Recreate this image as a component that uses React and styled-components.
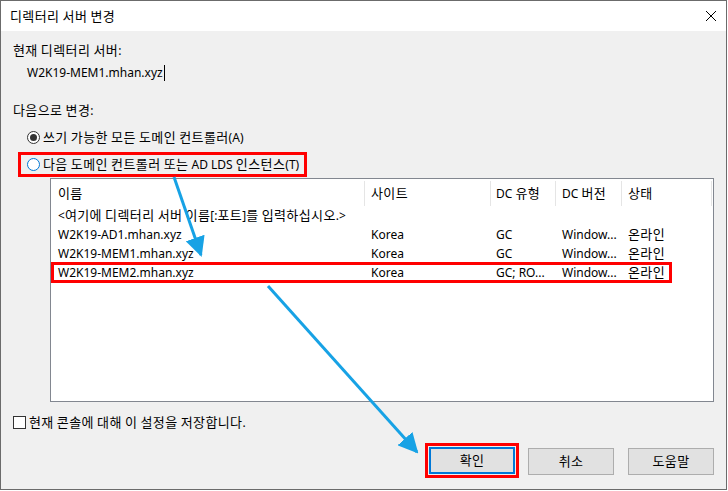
import React from "react";
import styled, { createGlobalStyle } from "styled-components";

const Global = createGlobalStyle`
  html, body { margin: 0; padding: 0; background: #ffffff; }
  body { font-family: "Noto Sans", "Noto Sans CJK KR", sans-serif; font-size: 12px; color: #000; line-height: 16px; }
  *, *::before, *::after { box-sizing: border-box; }
`;

const Han = styled.span`
  font-family: "Noto Sans CJK KR", sans-serif;
  font-size: 13px;
  letter-spacing: 0.4px;
  line-height: 16px;
`;

const Txt = styled.span`
  white-space: pre;
`;

function K({ children }) {
  const parts = String(children).split(/([\uAC00-\uD7A3]+)/);
  return (
    <Txt>
      {parts.map((p, i) =>
        /[\uAC00-\uD7A3]/.test(p) ? <Han key={i}>{p}</Han> : <React.Fragment key={i}>{p}</React.Fragment>
      )}
    </Txt>
  );
}

const Dialog = styled.div`
  position: relative;
  width: 727px;
  height: 490px;
  border: 1px solid #6b6b6b;
  background: #f0f0f0;
  display: flex;
  flex-direction: column;
`;

const TitleBar = styled.div`
  height: 30px;
  background: #ffffff;
  display: flex;
  align-items: center;
  justify-content: space-between;
  padding: 0 8px 0 9px;
`;

const CloseBtn = styled.div`
  width: 14px;
  height: 14px;
  display: flex;
  align-items: center;
  justify-content: center;
`;

const Body = styled.div`
  flex: 1;
  padding: 11px 12px 0 12px;
  display: flex;
  flex-direction: column;
`;

const Label = styled.div`
  height: 16px;
  margin-top: ${(p) => p.$mt || 0}px;
  padding-left: ${(p) => p.$pl || 0}px;
  white-space: nowrap;
  display: flex;
  align-items: center;
`;

const Caret = styled.span`
  display: inline-block;
  width: 1px;
  height: 16px;
  background: #000;
  margin-left: 1px;
`;

const RadioRow = styled.div`
  display: flex;
  align-items: center;
  height: 18px;
  margin-top: 10px;
  padding-left: 14px;
  gap: 3px;
  white-space: nowrap;
`;

const Highlight = styled.div`
  border: 3px solid #ff0000;
  align-self: flex-start;
  display: flex;
  align-items: center;
`;

const RadioHighlight = styled(Highlight)`
  margin-top: 6px;
  margin-left: 5px;
  height: 25px;
  padding: 0 5px 0 6px;
  gap: 3px;
  white-space: nowrap;
`;

const Radio = styled.span`
  width: 13px;
  height: 13px;
  border-radius: 50%;
  border: 1px solid ${(p) => (p.$focus ? "#0078d7" : "#333333")};
  background: #fff;
  display: inline-flex;
  align-items: center;
  justify-content: center;
  flex-shrink: 0;
  &::after {
    content: "";
    width: 7px;
    height: 7px;
    border-radius: 50%;
    background: ${(p) => (p.$checked ? "#333333" : "transparent")};
  }
`;

const ListBox = styled.div`
  margin-top: 1px;
  margin-left: 37px;
  width: 664px;
  height: 224px;
  background: #ffffff;
  border: 1px solid #828790;
  display: flex;
  flex-direction: column;
`;

const cols = "314px 126px 65px 66px 90px";

const HeaderRow = styled.div`
  display: grid;
  grid-template-columns: ${cols};
  height: 27px;
`;

const HeaderCell = styled.div`
  display: flex;
  align-items: center;
  padding-left: ${(p) => p.$pl ?? 7}px;
  border-right: 1px solid #e5e5e5;
  margin: 2px 0 0;
  white-space: nowrap;
`;

const Row = styled.div`
  position: relative;
  display: grid;
  grid-template-columns: ${cols};
  height: 19px;
  align-items: center;
  white-space: nowrap;
  &::after {
    content: "";
    display: ${(p) => (p.$marked ? "block" : "none")};
    position: absolute;
    left: 0;
    top: -1px;
    width: 621px;
    height: 21px;
    border: 3px solid #ff0000;
    pointer-events: none;
  }
`;

const Cell = styled.div`
  padding-left: ${(p) => p.$pl ?? 7}px;
`;

const HintRow = styled.div`
  height: 19px;
  display: flex;
  align-items: center;
  padding-left: 7px;
  white-space: nowrap;
`;

const CheckRow = styled.div`
  margin-top: 12px;
  height: 16px;
  display: flex;
  align-items: center;
  gap: 3px;
  white-space: nowrap;
`;

const CheckBox = styled.span`
  width: 13px;
  height: 13px;
  border: 1px solid #333333;
  background: #fff;
  flex-shrink: 0;
`;

const ButtonRow = styled.div`
  margin-top: 18px;
  display: flex;
  justify-content: flex-end;
  gap: 14px;
`;

const ButtonHighlight = styled(Highlight)`
  margin: -5px;
  padding: 1px;
  background: #f0f0f0;
`;

const Button = styled.div`
  width: 86px;
  height: 27px;
  background: #e1e1e1;
  border: ${(p) => (p.$focus ? "2px solid #0078d7" : "1px solid #adadad")};
  display: flex;
  align-items: center;
  justify-content: center;
`;

const Overlay = styled.svg`
  position: absolute;
  left: -1px;
  top: -1px;
  width: 728px;
  height: 491px;
  pointer-events: none;
`;

const rows = [
  ["W2K19-AD1.mhan.xyz", "Korea", "GC", "Window...", "온라인"],
  ["W2K19-MEM1.mhan.xyz", "Korea", "GC", "Window...", "온라인"],
  ["W2K19-MEM2.mhan.xyz", "Korea", "GC; RO...", "Window...", "온라인", true],
];

export default function App() {
  return (
    <>
      <Global />
      <Dialog>
        <TitleBar>
          <K>디렉터리 서버 변경</K>
          <CloseBtn>
            <svg width="12" height="12" viewBox="0 0 12 12">
              <path d="M1 1L11 11M11 1L1 11" stroke="#000" strokeWidth="1" />
            </svg>
          </CloseBtn>
        </TitleBar>
        <Body>
          <Label><K>현재 디렉터리 서버:</K></Label>
          <Label $mt={7} $pl={14}>
            W2K19-MEM1.mhan.xyz<Caret />
          </Label>
          <Label $mt={21}><K>다음으로 변경:</K></Label>
          <RadioRow>
            <Radio $checked />
            <K>쓰기 가능한 모든 도메인 컨트롤러(A)</K>
          </RadioRow>
          <RadioHighlight>
            <Radio $focus />
            <K>다음 도메인 컨트롤러 또는 AD LDS 인스턴스(T)</K>
          </RadioHighlight>
          <ListBox>
            <HeaderRow>
              <HeaderCell><K>이름</K></HeaderCell>
              <HeaderCell $pl={6}><K>사이트</K></HeaderCell>
              <HeaderCell $pl={5}><K>DC 유형</K></HeaderCell>
              <HeaderCell $pl={6}><K>DC 버전</K></HeaderCell>
              <HeaderCell $pl={6}><K>상태</K></HeaderCell>
            </HeaderRow>
            <HintRow><K>{"<여기에 디렉터리 서버 이름[:포트]를 입력하십시오.>"}</K></HintRow>
            {rows.map((r) => (
              <Row key={r[0]} $marked={r[5]}>
                <Cell>{r[0]}</Cell>
                <Cell $pl={6}>{r[1]}</Cell>
                <Cell $pl={5}>{r[2]}</Cell>
                <Cell $pl={6}>{r[3]}</Cell>
                <Cell $pl={6}><K>{r[4]}</K></Cell>
              </Row>
            ))}
          </ListBox>
          <CheckRow>
            <CheckBox />
            <K>현재 콘솔에 대해 이 설정을 저장합니다.</K>
          </CheckRow>
          <ButtonRow>
            <ButtonHighlight>
              <Button $focus><K>확인</K></Button>
            </ButtonHighlight>
            <Button><K>취소</K></Button>
            <Button><K>도움말</K></Button>
          </ButtonRow>
        </Body>
        <Overlay viewBox="0 0 728 491">
          <defs>
            <marker
              id="ah"
              viewBox="0 0 10 10"
              refX="9"
              refY="5"
              markerUnits="userSpaceOnUse"
              markerWidth="20"
              markerHeight="20"
              orient="auto"
            >
              <path d="M0,0 L10,5 L0,10 z" fill="#17a2e5" />
            </marker>
          </defs>
          <line x1="174" y1="177" x2="201" y2="255" stroke="#17a2e5" strokeWidth="3" markerEnd="url(#ah)" />
          <line x1="268" y1="286" x2="417" y2="452" stroke="#17a2e5" strokeWidth="3" markerEnd="url(#ah)" />
        </Overlay>
      </Dialog>
    </>
  );
}
